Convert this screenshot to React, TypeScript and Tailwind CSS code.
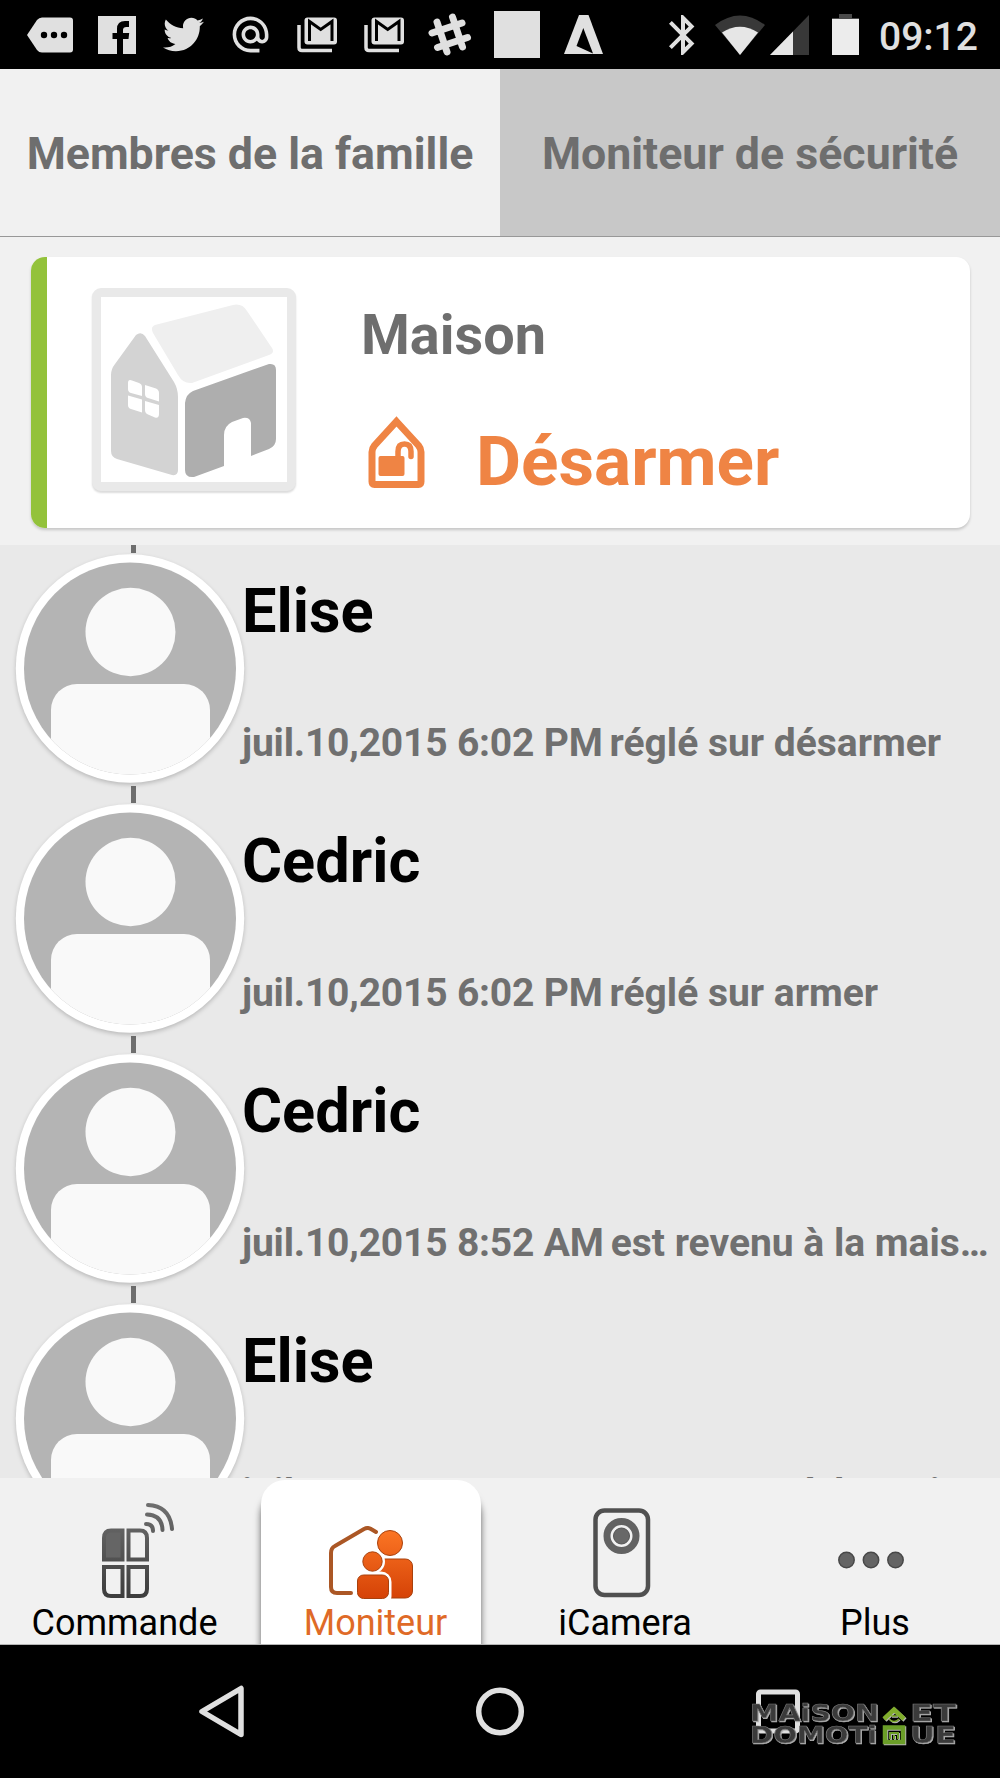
import React from 'react';
import { FaTwitter } from 'react-icons/fa';
import { MdAlternateEmail, MdBluetooth } from 'react-icons/md';

interface LogEntry {
    name: string;
    date: string;
    action: string;
}

const entries: LogEntry[] = [
    { name: 'Elise', date: 'juil.10,2015 6:02 PM', action: 'réglé sur désarmer' },
    { name: 'Cedric', date: 'juil.10,2015 6:02 PM', action: 'réglé sur armer' },
    { name: 'Cedric', date: 'juil.10,2015 8:52 AM', action: 'est revenu à la maison' },
    { name: 'Elise', date: 'juil.10,2015 7:12 AM', action: 'est revenu à la maison' },
];

const GmailIcon = () => (
    <svg width="40" height="36" viewBox="0 0 40 36" fill="none">
        <path d="M2 8V30.500Q2 33.500 5 33.500H35" stroke="#e0e0e0" strokeWidth="3.500" />
        <rect x="7.500" y="0.500" width="32.500" height="27" rx="3" fill="#e0e0e0" />
        <path d="M12.500 24V4.500L23.700 12.500L35 4.500V24" stroke="#000" strokeWidth="3" />
    </svg>
);

const StatusBar = () => (
    <div className="flex h-[69px] shrink-0 items-center bg-black text-[#e0e0e0]">
        <div className="ml-[17px] grid w-[600px] grid-cols-9 place-items-center">
            <svg width="46" height="36" viewBox="0 0 46 36">
                <path d="M0 18L10 3Q12 0.500 15 0.500H43Q46 0.500 46 3.500V32.500Q46 35.500 43 35.500H15Q12 35.500 10 33Z" fill="#e0e0e0" />
                <circle cx="17" cy="18" r="3.200" />
                <circle cx="27" cy="18" r="3.200" />
                <circle cx="37" cy="18" r="3.200" />
            </svg>
            <svg width="38" height="38" viewBox="0 0 38 38">
                <path d="M0 0H38V38H25V23H30.500L31.200 17H25V14Q25 11 28.500 11H31V5H27Q19 5 19 13V17H14.500V23H19V38H0Z" fill="#e0e0e0" />
            </svg>
            <FaTwitter size={41} />
            <MdAlternateEmail size={43} />
            <GmailIcon />
            <GmailIcon />
            <svg width="44" height="44" viewBox="0 0 44 44" stroke="#e0e0e0" strokeWidth="7" strokeLinecap="round">
                <path d="M9 9L19 39M24.500 4L34.500 34M4 20L34 10M9.500 34.500L39.500 24.500" />
            </svg>
            <div className="h-[47px] w-[46px] bg-[#e0e0e0]" />
            <svg width="39" height="39" viewBox="0 0 39 39">
                <path d="M15 0H24.500L39 39H0Z" fill="#e0e0e0" />
                <path d="M19.300 13L12.500 31L29 38.500Z" />
            </svg>
        </div>
        <MdBluetooth size={48} className="ml-[42px] shrink-0" />
        <svg width="50" height="40" viewBox="0 0 50 40" className="ml-[8px] shrink-0">
            <path d="M0 10Q25 -9 50 10L25 40Z" fill="#383838" />
            <path d="M7 17.500Q25 6 43 17.500L25 40Z" fill="#e6e6e6" />
        </svg>
        <svg width="39" height="40" viewBox="0 0 39 40" className="ml-[5px] shrink-0">
            <path d="M39 0V40H0Z" fill="#383838" />
            <path d="M23 16.500V40H0Z" fill="#e6e6e6" />
        </svg>
        <svg width="27" height="41" viewBox="0 0 27 41" className="ml-[23px] shrink-0">
            <path d="M7 0H20V4H27V9H0V4H7Z" fill="#4a4a4a" />
            <path d="M0 5H27V41H0Z" fill="#ececec" />
        </svg>
        <span className="ml-[20px] pt-[5px] text-[39px] leading-none font-medium">09:12</span>
    </div>
);

const HouseIcon = () => (
    <svg width="186" height="186" viewBox="0 0 186 186">
        <path d="M54 28Q49 30 52 36L77 78Q82 87 91 86L168 58Q174 56 171 51L146 14Q141 6 132 8Z" fill="#efefef" />
        <path d="M35 38Q40 34 44 39L73 85Q77 92 77 100V173Q77 179 71 178L16 162Q10 160 10 154V78Q10 72 14 67Z" fill="#d3d3d3" />
        <path d="M27 86Q27 82 31 83.500L38 86Q41 87 41 90V99L30 96Q27 95 27 92ZM44 88L55 91.500Q58 93 58 96V104.500L47 101Q44 100 44 97ZM27 98.500L41 102.500V115.500L30 112Q27 111 27 108ZM44 104L58 108V117Q58 121.500 54 120.500L47 117.500Q44 116 44 113Z" fill="#fff" />
        <path d="M92 94L168 67Q175 66 175 73V142Q175 149 168 152L150 159V126Q149 120 142 121L131 125Q123 129 123 138V169L93 180Q84 181 84 173V106Q85 97 92 94Z" fill="#aeaeae" />
    </svg>
);

const UnlockedHomeIcon = () => (
    <svg width="58" height="74" viewBox="0 0 58 74" fill="none">
        <path d="M28.500 6.500L50.500 30.500Q53 33.500 53 37V66.500Q53 69.500 50.500 69.500H6.500Q4 69.500 4 66.500V37Q4 33.500 6.500 30.500Z" stroke="#ef8444" strokeWidth="7" />
        <rect x="10.500" y="41" width="26" height="20" rx="2" fill="#ef8444" />
        <path d="M30 42.500V36.500Q30 29 36.500 29Q43 29 43 36.500V41.500" stroke="#ef8444" strokeWidth="5.500" strokeLinecap="round" />
    </svg>
);

const HomeCard = () => (
    <div className="h-[308px] shrink-0 bg-[#f1f1f1] pt-[20px] pr-[30px] pl-[31px]">
        <div className="flex h-[271px] overflow-hidden rounded-[14px] bg-white shadow-[0_2px_3px_rgba(0,0,0,0.18)]">
            <div className="w-4 shrink-0 bg-[#93c23b]" />
            <div className="mt-[31px] ml-[45px] h-[203px] w-[204px] shrink-0 rounded-[9px] border-[9px] border-[#e9e9e9] bg-white shadow-[0_2px_2px_rgba(0,0,0,0.14)]">
                <HouseIcon />
            </div>
            <div className="ml-[65px] pt-[43px]">
                <div className="text-[55.800px] leading-[70px] font-bold text-[#6e6e6e]">Maison</div>
                <div className="flex pt-[45px] pl-[7px]">
                    <UnlockedHomeIcon />
                    <span className="ml-[50px] pt-[12px] text-[69.300px] leading-[70px] font-bold text-[#ef8444]">Désarmer</span>
                </div>
            </div>
        </div>
    </div>
);

const Avatar = () => (
    <svg width="240" height="240" viewBox="0 0 240 240" className="drop-shadow-[0_2px_2px_rgba(0,0,0,0.2)]">
        <defs>
            <clipPath id="face">
                <circle cx="120" cy="119.500" r="106" />
            </clipPath>
        </defs>
        <circle cx="120" cy="119.500" r="114.200" fill="#fff" />
        <circle cx="120" cy="119.500" r="106" fill="#b4b4b4" />
        <g clipPath="url(#face)" fill="#f9f9f9">
            <ellipse cx="120.500" cy="83" rx="45" ry="44.200" />
            <rect x="41" y="135" width="159" height="120" rx="26" />
        </g>
    </svg>
);

const LogRow: React.FC<{ entry: LogEntry }> = ({ entry }) => (
    <li className="flex h-[250px]">
        <div className="w-[242px] shrink-0 pl-[10px]">
            <div className="ml-[120.500px] h-[8px] w-[5px] bg-[#6e6e6e]" />
            <div className="-mt-[4.500px] h-[237.500px] w-[240px]">
                <Avatar />
            </div>
            <div className="ml-[120.500px] h-[9px] w-[5px] bg-[#6e6e6e]" />
        </div>
        <div className="min-w-0 flex-1 pr-[4px]">
            <div className="pt-[31px] text-[61.300px] leading-[70px] font-bold text-black">{entry.name}</div>
            <div className="flex gap-[7px] pt-[72px] text-[39px] leading-[50px] font-bold text-[#707070]">
                <span className="shrink-0 tracking-[-0.2px]">{entry.date}</span>
                <span className="truncate">{entry.action}</span>
            </div>
        </div>
    </li>
);

const RemoteIcon = () => (
    <svg width="74" height="98" viewBox="0 0 74 98" fill="none" stroke="url(#gris)" strokeWidth="4">
        <defs>
            <linearGradient id="gris" gradientUnits="userSpaceOnUse" x1="0" y1="0" x2="0" y2="98">
                <stop offset="0" stopColor="#707070" />
                <stop offset="1" stopColor="#3c3c3c" />
            </linearGradient>
        </defs>
        <path d="M20.500 29.500V58.500H2V37Q2 29.500 9 29.500Z" fill="#656565" />
        <path d="M26.500 29.500H38Q45 29.500 45 37V58.500H26.500Z" />
        <path d="M2 66H20.500V95H9Q2 95 2 88Z" />
        <path d="M26.500 66H45V88Q45 95 38 95H26.500Z" />
        <g strokeLinecap="round">
            <path d="M44 23Q51 23 51 30" />
            <path d="M45 13.500Q60 14 60.500 29" />
            <path d="M46 4Q68 5 70 28" />
        </g>
    </svg>
);

const FamilyIcon = () => (
    <svg width="84" height="74" viewBox="0 0 84 74">
        <defs>
            <linearGradient id="orange" gradientUnits="userSpaceOnUse" x1="0" y1="5" x2="0" y2="74">
                <stop offset="0" stopColor="#fb7524" />
                <stop offset="1" stopColor="#d44106" />
            </linearGradient>
        </defs>
        <path d="M47 6L42 3Q39 1 35 3L6 20Q2 22 2 27V61Q2 67 8 67H22" fill="none" stroke="#ab5725" strokeWidth="4" strokeLinecap="round" />
        <g fill="url(#orange)" stroke="#a8410d" strokeWidth="1">
            <circle cx="61" cy="17" r="12.500" />
            <rect x="49" y="33" width="34.500" height="39" rx="7" />
        </g>
        <g stroke="#fff" strokeWidth="5" fill="#fff">
            <circle cx="43.500" cy="35.500" r="10" />
            <rect x="28" y="48" width="32" height="30" rx="8" />
        </g>
        <g fill="url(#orange)" stroke="#a8410d" strokeWidth="1">
            <circle cx="43.500" cy="35.500" r="9.700" />
            <rect x="28.500" y="49" width="31" height="23.500" rx="6" />
        </g>
    </svg>
);

const CameraIcon = () => (
    <svg width="58" height="90" viewBox="0 0 58 90" fill="none" stroke="#505050">
        <rect x="2.500" y="2.500" width="52.500" height="84.500" rx="9" strokeWidth="4.500" />
        <circle cx="28.500" cy="28" r="14.500" stroke="#626262" strokeWidth="7" />
        <circle cx="28.500" cy="28" r="8" fill="#686868" stroke="#555" strokeWidth="1" />
    </svg>
);

const DotsIcon = () => (
    <svg width="66" height="18" viewBox="0 0 66 18" fill="#646464" stroke="#484848" strokeWidth="1.500">
        <circle cx="8.500" cy="9" r="7.700" />
        <circle cx="33" cy="9" r="7.700" />
        <circle cx="57.500" cy="9" r="7.700" />
    </svg>
);

const BottomTabs = () => (
    <nav className="grid h-[167px] shrink-0 grid-cols-4 overflow-hidden border-b border-[#b5b5b5] bg-[#f1f1f1] text-[36px] leading-[40px] text-black">
        <div className="flex flex-col items-center">
            <div className="mt-[23px] ml-[28px] h-[102px]">
                <RemoteIcon />
            </div>
            <span className="mr-[1px]">Commande</span>
        </div>
        <div className="mt-[2px] ml-[11px] flex w-[220px] flex-col items-center rounded-t-[24px] bg-white shadow-[0_12px_7px_rgba(0,0,0,0.6)]">
            <div className="mt-[46px] h-[77px]">
                <FamilyIcon />
            </div>
            <span className="ml-[9px] text-[#df6a27]">Moniteur</span>
        </div>
        <div className="flex flex-col items-center">
            <div className="mt-[30px] mr-[7px] h-[95px]">
                <CameraIcon />
            </div>
            <span>iCamera</span>
        </div>
        <div className="flex flex-col items-center">
            <div className="mt-[73px] mr-[8px] h-[52px]">
                <DotsIcon />
            </div>
            <span>Plus</span>
        </div>
    </nav>
);

const Watermark = () => (
    <svg
        width="212"
        height="46"
        viewBox="0 0 212 46"
        className="absolute top-[56px] left-[748px] font-['DejaVu_Sans'] text-[23.500px] font-bold drop-shadow-[1px_1px_0_#b4b4b4]"
        fill="#3a3a3a"
        stroke="#777"
        strokeWidth="0.600"
    >
        <text x="2" y="20" textLength="129" lengthAdjust="spacingAndGlyphs">MAiSON</text>
        <text x="162" y="20" textLength="46" lengthAdjust="spacingAndGlyphs">ET</text>
        <text x="2" y="42" textLength="127" lengthAdjust="spacingAndGlyphs">DOMOTi</text>
        <text x="162" y="42" textLength="46" lengthAdjust="spacingAndGlyphs">UE</text>
        <g fill="none" stroke="#80ad2c" strokeWidth="4.500">
            <path d="M136 18L146 8.500L156 18" />
            <path d="M141 18Q146 23 151 18M143 15H149" strokeWidth="1.500" />
            <path d="M137 26.500H155V41H137Z" stroke="#6b9e28" />
            <path d="M142 38V32H150V38M146 34V38" stroke="#6b9e28" strokeWidth="2" />
        </g>
    </svg>
);

const SystemNav = () => (
    <div className="relative flex h-[133px] shrink-0 items-center justify-between bg-black px-[195px]">
        <svg width="54" height="56" viewBox="0 0 54 56" fill="none" stroke="#e0e0e0" strokeWidth="5.500" strokeLinejoin="round">
            <path d="M7 27.500L46 4.500V50.500Z" />
        </svg>
        <svg width="54" height="54" viewBox="0 0 54 54" fill="none" stroke="#e0e0e0" strokeWidth="5.500">
            <circle cx="27" cy="26.500" r="21.300" />
        </svg>
        <svg width="54" height="54" viewBox="0 0 54 54" fill="none" stroke="#e0e0e0" strokeWidth="5">
            <rect x="7.500" y="7" width="39" height="39" rx="2" />
        </svg>
        <Watermark />
    </div>
);

export default function App() {
    return (
        <div className="flex h-[1778px] w-[1000px] flex-col overflow-hidden bg-black font-['Roboto',sans-serif]">
            <StatusBar />
            <div className="grid h-[168px] shrink-0 grid-cols-2 border-b border-[#989898] text-center text-[44.700px] font-bold text-[#6e6e6e]">
                <div className="bg-[#f1f1f1] pt-[3px] leading-[164px]">Membres de la famille</div>
                <div className="bg-[#c8c8c8] pt-[3px] leading-[164px]">Moniteur de sécurité</div>
            </div>
            <HomeCard />
            <ul className="h-[933px] shrink-0 overflow-hidden bg-[#e9e9e9]">
                {entries.map((entry, i) => (
                    <LogRow key={i} entry={entry} />
                ))}
            </ul>
            <BottomTabs />
            <SystemNav />
        </div>
    );
}
